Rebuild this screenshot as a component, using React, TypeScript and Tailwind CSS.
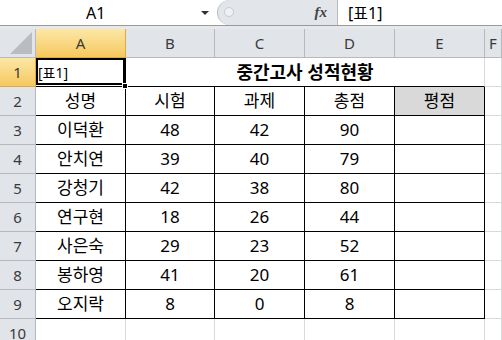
import React from 'react';

const font = { fontFamily: '"Noto Sans", "Noto Sans CJK KR", sans-serif' };

const cols = ['A', 'B', 'C', 'D', 'E', 'F'];

const rows: [string, number, number, number][] = [
  ['이덕환', 48, 42, 90],
  ['안치연', 39, 40, 79],
  ['강청기', 42, 38, 80],
  ['연구현', 18, 26, 44],
  ['사은숙', 29, 23, 52],
  ['봉하영', 41, 20, 61],
  ['오지락', 8, 0, 8],
];

const headCell = 'flex items-center justify-center border-r border-b border-[#b5b9be] bg-[#e1e4e9] text-[#3a3a3a]';
const hiHead = 'flex items-center justify-center border-r border-b border-[#e0aa3c] bg-gradient-to-b from-[#fce7a6] to-[#f5c85c] text-[#3a3a3a]';
const tCell = 'flex items-center justify-center border-r border-b border-black text-[17px] text-black';
const gCell = 'border-r border-b border-[#d8d9db]';

const RowHead: React.FC<{ n: number; hi?: boolean }> = ({ n, hi }) => (
  <div className={`${hi ? hiHead : headCell} text-[15px]`}>{n}</div>
);

const App: React.FC = () => {
  return (
    <div className="w-[502px] h-[340px] overflow-hidden bg-white" style={font}>
      {/* formula bar */}
      <div className="flex h-[26px] items-stretch border-b border-[#9a9a9a] bg-white">
        <div className="flex w-[217px] items-center">
          <div className="flex-1 pl-[86px] text-[16px] text-black">A1</div>
          <div className="mr-[8px] h-0 w-0 border-x-[4px] border-t-[4px] border-x-transparent border-t-[#333]" />
        </div>
        <div className="relative flex w-[121px] items-center justify-end rounded-l-[13px] border-l border-r border-[#b8bcc1] bg-[#e2e5e9] pr-[10px]">
          <div className="absolute left-[6px] top-[7px] h-[10px] w-[10px] rounded-full border border-[#c9ccd0] bg-[#eff1f3]" />
          <span className="text-[15px] italic font-bold text-[#444]" style={{ fontFamily: '"Liberation Serif", serif' }}>
            fx
          </span>
        </div>
        <div className="flex items-center pl-[10px] text-[16px] text-black">[표1]</div>
      </div>
      <div className="h-[3px] bg-[#e6e8ec]" />

      {/* sheet */}
      <div className="grid grid-cols-[36px_90px_89px_90px_90px_90px_17px] auto-rows-[29px]">
        {/* corner + column headers */}
        <div className={`${headCell} relative`}>
          <svg className="absolute bottom-[3px] right-[3px]" width="22" height="22" viewBox="0 0 22 22">
            <polygon points="22,0 22,22 0,22" fill="#b9bdc2" />
          </svg>
        </div>
        {cols.map((c) => (
          <div key={c} className={`${c === 'A' ? hiHead : headCell} text-[15px]`}>
            {c}
          </div>
        ))}

        {/* row 1 */}
        <RowHead n={1} hi />
        <div className="relative flex items-center border-r border-b border-black pl-[2px] text-[14px] text-black">
          [표1]
          <div className="pointer-events-none absolute left-0 top-0 bottom-[1px] right-[-1px] border-2 border-r-[3px] border-black" />
          <div className="absolute bottom-[-3px] right-[-3px] h-[6px] w-[6px] border border-white bg-black" />
        </div>
        <div className="col-span-4 flex items-center justify-center border-r border-b border-r-[#d8d9db] border-b-black text-[18px] font-bold text-black">
          중간고사 성적현황
        </div>
        <div className={gCell} />

        {/* row 2 */}
        <RowHead n={2} />
        <div className={tCell}>성명</div>
        <div className={tCell}>시험</div>
        <div className={tCell}>과제</div>
        <div className={tCell}>총점</div>
        <div className={`${tCell} bg-[#d9d9d9]`}>평점</div>
        <div className={gCell} />

        {rows.map(([name, a, b, t], i) => (
          <React.Fragment key={name}>
            <RowHead n={i + 3} />
            <div className={tCell}>{name}</div>
            <div className={tCell}>{a}</div>
            <div className={tCell}>{b}</div>
            <div className={tCell}>{t}</div>
            <div className={tCell} />
            <div className={gCell} />
          </React.Fragment>
        ))}

        {/* row 10 */}
        <RowHead n={10} />
        {[0, 1, 2, 3, 4, 5].map((k) => (
          <div key={k} className={gCell} />
        ))}
      </div>
    </div>
  );
};

export default App;
